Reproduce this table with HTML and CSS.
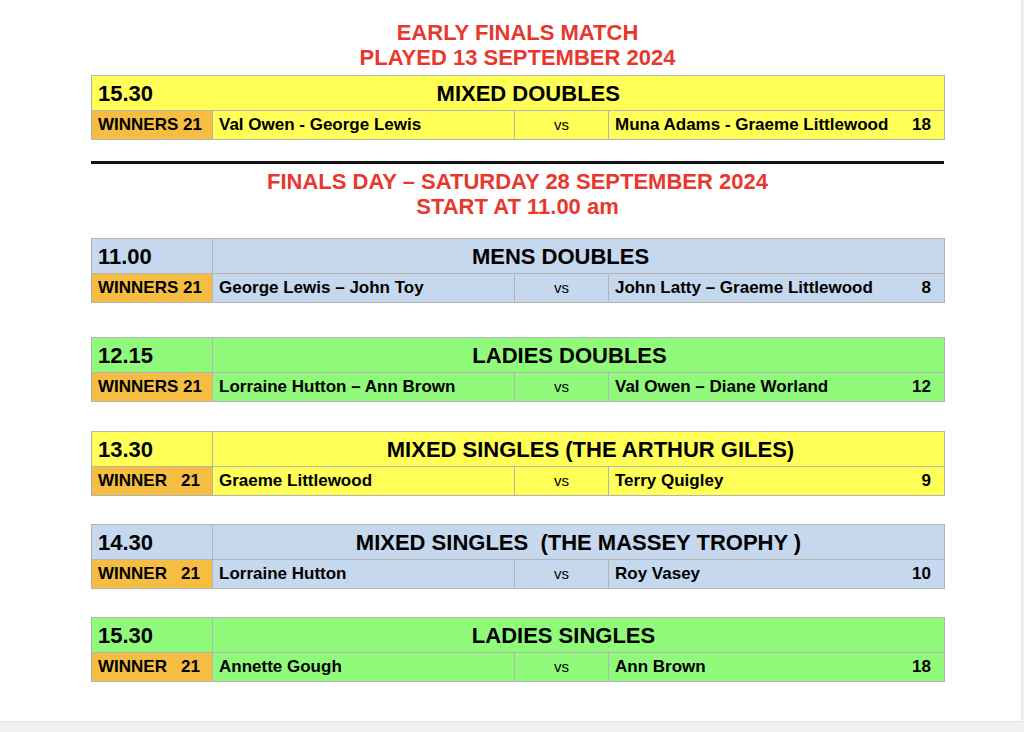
FILE: index.html
```html
<!DOCTYPE html>
<html>
<head>
<meta charset="utf-8">
<link rel="stylesheet" href="styles.css">
</head>
<body>
<div class="page">
  <div class="title t1">EARLY FINALS MATCH<br>PLAYED 13 SEPTEMBER 2024</div>
  <table class="match yellow m1">
    <colgroup><col class="c1"><col class="c2"><col class="c3"><col class="c4"></colgroup>
    <tr class="head"><td class="time nodiv">15.30</td><td colspan="3" class="event nodivl shift-a">MIXED DOUBLES</td></tr>
    <tr class="row"><td class="win">WINNERS 21</td><td>Val Owen - George Lewis</td><td class="vs">vs</td><td><div class="opp"><span>Muna Adams - Graeme Littlewood</span><span>18</span></div></td></tr>
  </table>
  <div class="rule"></div>
  <div class="title t2">FINALS DAY – SATURDAY 28 SEPTEMBER 2024<br>START AT 11.00 am</div>

  <table class="match blue m2">
    <colgroup><col class="c1"><col class="c2"><col class="c3"><col class="c4"></colgroup>
    <tr class="head"><td class="time">11.00</td><td colspan="3" class="event shift-b">MENS DOUBLES</td></tr>
    <tr class="row"><td class="win">WINNERS 21</td><td>George Lewis – John Toy</td><td class="vs">vs</td><td><div class="opp"><span>John Latty – Graeme Littlewood</span><span>8</span></div></td></tr>
  </table>

  <table class="match green m3">
    <colgroup><col class="c1"><col class="c2"><col class="c3"><col class="c4"></colgroup>
    <tr class="head"><td class="time">12.15</td><td colspan="3" class="event shift-c">LADIES DOUBLES</td></tr>
    <tr class="row"><td class="win">WINNERS 21</td><td>Lorraine Hutton – Ann Brown</td><td class="vs">vs</td><td><div class="opp"><span>Val Owen – Diane Worland</span><span>12</span></div></td></tr>
  </table>

  <table class="match yellow m4">
    <colgroup><col class="c1"><col class="c2"><col class="c3"><col class="c4"></colgroup>
    <tr class="head"><td class="time">13.30</td><td colspan="3" class="event shift-d">MIXED SINGLES (THE ARTHUR GILES)</td></tr>
    <tr class="row"><td class="win">WINNER   21</td><td>Graeme Littlewood</td><td class="vs">vs</td><td><div class="opp"><span>Terry Quigley</span><span>9</span></div></td></tr>
  </table>

  <table class="match blue m5">
    <colgroup><col class="c1"><col class="c2"><col class="c3"><col class="c4"></colgroup>
    <tr class="head"><td class="time">14.30</td><td colspan="3" class="event">MIXED SINGLES  (THE MASSEY TROPHY )</td></tr>
    <tr class="row"><td class="win">WINNER   21</td><td>Lorraine Hutton</td><td class="vs">vs</td><td><div class="opp"><span>Roy Vasey</span><span>10</span></div></td></tr>
  </table>

  <table class="match green m6">
    <colgroup><col class="c1"><col class="c2"><col class="c3"><col class="c4"></colgroup>
    <tr class="head"><td class="time">15.30</td><td colspan="3" class="event shift-e">LADIES SINGLES</td></tr>
    <tr class="row"><td class="win">WINNER   21</td><td>Annette Gough</td><td class="vs">vs</td><td><div class="opp"><span>Ann Brown</span><span>18</span></div></td></tr>
  </table>
</div>
</body>
</html>
```
FILE: styles.css
```css
html, body {
  margin: 0;
  padding: 0;
}
body {
  background: #f1f1f1;
  width: 1024px;
  height: 732px;
  overflow: hidden;
  font-family: "Liberation Sans", Arial, sans-serif;
}
.page {
  width: 1022px;
  height: 722px;
  background: #ffffff;
  border-right: 1px solid #e4e4e4;
  border-bottom: 1px solid #e4e4e4;
  box-sizing: border-box;
  padding-top: 20px;
  padding-left: 91px;
}
.title {
  width: 853px;
  text-align: center;
  color: #e8382d;
  font-weight: bold;
  font-size: 22px;
  line-height: 25px;
  height: 50px;
}
.match {
  border-collapse: collapse;
  table-layout: fixed;
  width: 853px;
  color: #000;
  font-weight: bold;
}
.c1 { width: 121px; }
.c2 { width: 302px; }
.c3 { width: 94px; }
.c4 { width: 336px; }
.match td {
  border: 1px solid #b4b4b4;
  padding: 0 6px;
  white-space: pre;
  overflow: hidden;
}
.head td {
  height: 34px;
  font-size: 22px;
  line-height: 25px;
}
.row td {
  height: 28px;
  font-size: 17px;
  line-height: 20px;
}
.time { padding-left: 6px; }
.event { text-align: center; }
.nodiv { border-right: none !important; }
.nodivl { border-left: none !important; }
.shift-a { padding-right: 106px !important; }
.shift-b { padding-right: 42px !important; }
.shift-c { padding-right: 24px !important; }
.shift-d { padding-left: 30px !important; }
.shift-e { padding-right: 36px !important; }
.vs {
  text-align: center;
  font-weight: normal;
  font-size: 15px !important;
}
.opp {
  display: flex;
  justify-content: space-between;
  padding-right: 7px;
}
.win { background: #f5be43; }
.yellow { background: #ffff57; }
.blue { background: #c5d8ee; }
.green { background: #90fa7a; }
.yellow .win, .blue .win, .green .win { background: #f5be43; }
.m1 { margin-top: 5px; }
.rule {
  width: 853px;
  height: 3px;
  background: #111;
  margin-top: 21px;
  margin-bottom: 5px;
}
.m2 { margin-top: 19px; }
.m3 { margin-top: 34px; }
.m4 { margin-top: 29px; }
.m5 { margin-top: 28px; }
.m6 { margin-top: 28px; }
```
